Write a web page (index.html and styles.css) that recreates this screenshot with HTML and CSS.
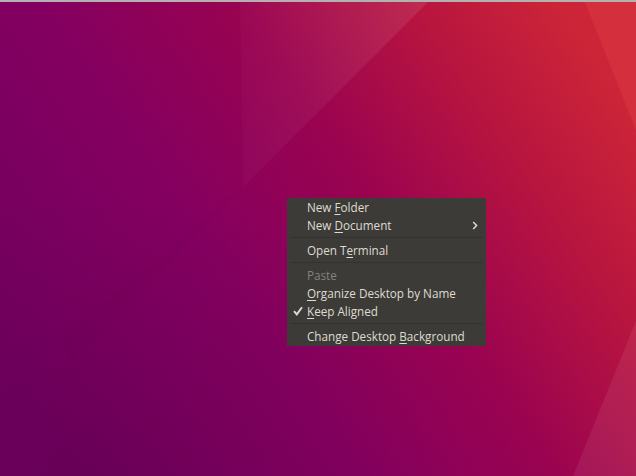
FILE: index.html
```html
<!DOCTYPE html>
<html>
<head>
<meta charset="utf-8">
<link rel="stylesheet" href="styles.css">
</head>
<body>
<div class="screen">
  <div class="topbar"></div>
  <div class="desktop">
    <svg class="wallpaper" width="636" height="474" viewBox="0 2 636 474" xmlns="http://www.w3.org/2000/svg">
      <defs>
        <linearGradient id="base" x1="0" y1="0.75" x2="1" y2="0.25">
          <stop offset="0" stop-color="#71005f"/>
          <stop offset="0.35" stop-color="#840060"/>
          <stop offset="0.6" stop-color="#9a0350"/>
          <stop offset="0.82" stop-color="#b8153f"/>
          <stop offset="1" stop-color="#cc2538"/>
        </linearGradient>
        <linearGradient id="band" x1="0" y1="0" x2="1" y2="0">
          <stop offset="0" stop-color="#ffffff" stop-opacity="0.02"/>
          <stop offset="1" stop-color="#ffffff" stop-opacity="0.09"/>
        </linearGradient>
        <radialGradient id="dark" cx="0.15" cy="1" r="0.6">
          <stop offset="0" stop-color="#000000" stop-opacity="0.08"/>
          <stop offset="1" stop-color="#000000" stop-opacity="0"/>
        </radialGradient>
      </defs>
      <rect x="0" y="0" width="636" height="476" fill="url(#base)"/>
      <rect x="0" y="0" width="636" height="476" fill="url(#dark)"/>
      <polygon points="240,0 430,0 243,187" fill="url(#band)"/>
      <polygon points="584,0 636,0 636,130" fill="#ff7058" fill-opacity="0.14"/>
      <polygon points="636,321 636,476 573,476" fill="#ffffff" fill-opacity="0.07"/>
      <polygon points="243,187 73,362 60,340" fill="#000000" fill-opacity="0.015"/>
    </svg>
    <div class="menu">
      <div class="item"><span class="ind"></span><span class="label">New <u>F</u>older</span><span class="sub"></span></div>
      <div class="item"><span class="ind"></span><span class="label">New <u>D</u>ocument</span><span class="sub"><svg width="6" height="9" viewBox="0 0 6 9"><polyline points="1.2,1 4.6,4.5 1.2,8" fill="none" stroke="#dfdbd2" stroke-width="1.5"/></svg></span></div>
      <div class="sep"></div>
      <div class="item"><span class="ind"></span><span class="label">Open T<u>e</u>rminal</span><span class="sub"></span></div>
      <div class="sep"></div>
      <div class="item disabled"><span class="ind"></span><span class="label">Paste</span><span class="sub"></span></div>
      <div class="item"><span class="ind"></span><span class="label"><u>O</u>rganize Desktop by Name</span><span class="sub"></span></div>
      <div class="item"><span class="ind"><svg width="10" height="10" viewBox="0 0 10 10"><polyline points="1,5.2 3.8,8.4 9,1.2" fill="none" stroke="#dfdbd2" stroke-width="1.9"/></svg></span><span class="label"><u>K</u>eep Aligned</span><span class="sub"></span></div>
      <div class="sep"></div>
      <div class="item"><span class="ind"></span><span class="label">Change Desktop <u>B</u>ackground</span><span class="sub"></span></div>
    </div>
  </div>
</div>
</body>
</html>
```
FILE: styles.css
```css
html, body {
  margin: 0;
  padding: 0;
}
body {
  width: 636px;
  height: 476px;
  overflow: hidden;
  font-family: "Open Sans", "Noto Sans", sans-serif;
}
.screen {
  display: flex;
  flex-direction: column;
  width: 636px;
  height: 476px;
}
.topbar {
  height: 2px;
  background: #b4b2b0;
  flex: none;
}
.desktop {
  position: relative;
  flex: 1;
}
.wallpaper {
  display: block;
}
.menu {
  position: absolute;
  left: 287px;
  top: 196px;
  width: 199px;
  box-sizing: border-box;
  padding: 0 0 1px;
  background: #3c3b37;
  color: #dfdbd2;
  font-size: 11.7px;
  display: flex;
  flex-direction: column;
}
.item {
  display: grid;
  grid-template-columns: 20px 1fr 14px;
  align-items: center;
  height: 18px;
  white-space: nowrap;
}
.item u {
  text-decoration-thickness: 1px;
  text-underline-offset: 2px;
}
.ind, .sub {
  display: flex;
  align-items: center;
  justify-content: center;
}
.ind {
  justify-content: flex-end;
  padding-right: 4px;
}
.sub {
  justify-content: flex-start;
}
.disabled {
  color: #84837d;
}
.sep {
  height: 7px;
  display: flex;
  align-items: center;
  padding: 0 3px;
}
.sep::before {
  content: "";
  flex: 1;
  height: 1px;
  background: #33322f;
}
```
